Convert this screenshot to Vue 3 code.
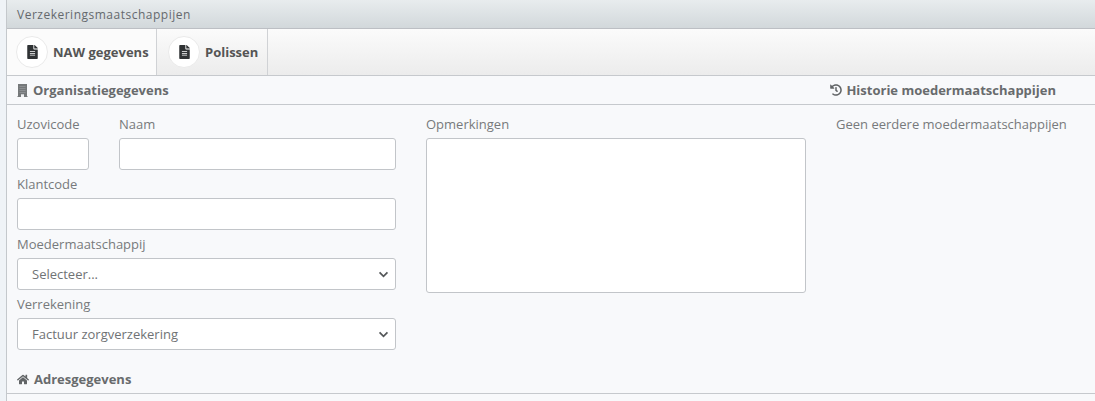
<script setup>
const filePath = 'M224 136V0H24C10.7 0 0 10.7 0 24v464c0 13.3 10.7 24 24 24h336c13.3 0 24-10.7 24-24V160H248c-13.200 0-24-10.800-24-24zm64 236c0 6.600-5.400 12-12 12H108c-6.600 0-12-5.400-12-12v-8c0-6.600 5.400-12 12-12h168c6.600 0 12 5.400 12 12v8zm0-64c0 6.600-5.400 12-12 12H108c-6.600 0-12-5.400-12-12v-8c0-6.600 5.400-12 12-12h168c6.600 0 12 5.400 12 12v8zm0-72v8c0 6.600-5.400 12-12 12H108c-6.600 0-12-5.400-12-12v-8c0-6.600 5.400-12 12-12h168c6.600 0 12 5.400 12 12zm96-114.100v6.100H256V0h6.100c6.400 0 12.500 2.500 17 7l97.900 98c4.500 4.500 7 10.600 7 16.900z'
const tabs = [
  { label: 'NAW gegevens', active: true },
  { label: 'Polissen', active: false },
]
</script>

<template>
  <div class="page">
    <div class="panel">
      <div class="title">Verzekeringsmaatschappijen</div>
      <div class="tabs">
        <div v-for="t in tabs" :key="t.label" class="tab" :class="{ active: t.active }">
          <span class="bubble">
            <svg class="file" viewBox="0 0 384 512"><path :d="filePath" /></svg>
          </span>
          <span class="tab-label">{{ t.label }}</span>
        </div>
      </div>
      <div class="section-head">
        <div class="sec-title">
          <svg class="ico-building" viewBox="0 0 10 13">
            <path class="b-body" d="M0.500 0h9v12h.5v1H0v-1h.5z" />
            <path class="b-win" d="M2 2h6v.8H2zM2 4h6v.8H2zM2 6h6v.8H2zM2 8h6v.8H2z" />
            <path class="b-door" d="M3.500 10.300h3V13h-3z" />
          </svg>
          <span>Organisatiegegevens</span>
        </div>
        <div class="sec-title hist">
          <svg class="ico-hist" viewBox="0 0 512 512"><path d="M504 255.500c.3 136.700-111.200 248.400-247.900 248.500-59 0-113.300-20.500-155.900-54.900-11.100-8.900-11.900-25.500-1.800-35.600l11.300-11.300c8.600-8.600 22.400-9.600 31.900-2C173.100 425.100 212.800 440 256 440c101.700 0 184-82.300 184-184 0-101.700-82.300-184-184-184-48.800 0-93.100 19-126.100 49.900l50.800 50.800c10.100 10.100 2.900 27.300-11.300 27.300H24c-8.800 0-16-7.200-16-16V38.600c0-14.300 17.200-21.400 27.300-11.300l49.400 49.400C129.200 34.100 189.600 8 256 8c136.800 0 247.700 110.800 248 247.500zm-180.900 78.800l9.800-12.600c8.100-10.500 6.300-25.500-4.200-33.700L288 256.300V152c0-13.300-10.700-24-24-24h-16c-13.300 0-24 10.700-24 24v135.700l65.400 50.900c10.500 8.100 25.500 6.200 33.700-4.300z"/></svg>
          <span>Historie moedermaatschappijen</span>
        </div>
      </div>
      <div class="form">
        <div class="col-left">
          <div class="row">
            <div class="field uzovi"><label>Uzovicode</label><div class="control"></div></div>
            <div class="field naam"><label>Naam</label><div class="control"></div></div>
          </div>
          <div class="field"><label>Klantcode</label><div class="control"></div></div>
          <div class="field"><label>Moedermaatschappij</label>
            <div class="control select">
              <span>Selecteer...</span>
              <svg class="chev" viewBox="0 0 12 8"><path d="M1.500 1.500 6 6l4.500-4.500" /></svg>
            </div>
          </div>
          <div class="field"><label>Verrekening</label>
            <div class="control select">
              <span>Factuur zorgverzekering</span>
              <svg class="chev" viewBox="0 0 12 8"><path d="M1.500 1.500 6 6l4.500-4.500" /></svg>
            </div>
          </div>
        </div>
        <div class="col-mid">
          <label>Opmerkingen</label>
          <div class="control area"></div>
        </div>
        <div class="col-right">Geen eerdere moedermaatschappijen</div>
      </div>
      <div class="address">
        <svg class="ico-home" viewBox="0 0 576 512"><path d="M280.400 148.300L96 300.100V464a16 16 0 0 0 16 16l112.100-.3a16 16 0 0 0 15.900-16V368a16 16 0 0 1 16-16h64a16 16 0 0 1 16 16v95.600a16 16 0 0 0 16 16.100L464 480a16 16 0 0 0 16-16V300L295.700 148.300a12.200 12.200 0 0 0-15.300 0zM571.600 251.500L488 182.600V44.100a12 12 0 0 0-12-12h-56a12 12 0 0 0-12 12v72.600L318.500 43a48 48 0 0 0-61 0L4.300 251.500a12 12 0 0 0-1.600 16.900l25.500 31A12 12 0 0 0 45.200 301l235.200-193.700a12.200 12.200 0 0 1 15.300 0L530.900 301a12 12 0 0 0 16.900-1.600l25.500-31a12 12 0 0 0-1.700-16.900z"/></svg>
        <span>Adresgegevens</span>
      </div>
    </div>
  </div>
</template>

<style scoped>
.page {
  width: 1095px;
  height: 401px;
  overflow: hidden;
  background: #eff3f7;
  padding-left: 6px;
  box-sizing: border-box;
  font-family: "Open Sans", sans-serif;
  font-size: 13px;
  color: #6f7274;
}
.panel {
  height: 100%;
  background: #f8f9fb;
  border-left: 1px solid #c4c8cc;
}
.title {
  height: 28px;
  padding-left: 10px;
  line-height: 29px;
  font-size: 12px;
  letter-spacing: 0.5px;
  color: #65696d;
  background: linear-gradient(#e8ecee, #d2d8db);
  border-bottom: 1px solid #bcbfc4;
}
.tabs {
  display: flex;
  height: 46px;
  background: linear-gradient(#fbfbfb, #ececec);
  border-bottom: 1px solid #c6c9cd;
}
.tab {
  display: flex;
  align-items: center;
  gap: 5px;
  padding: 0 9px 0 11px;
  border-right: 1px solid #d0d2d5;
  font-weight: 700;
  font-size: 13px;
  color: #555;
  white-space: nowrap;
}
.tab.active { background: #fbfbfb; width: 150px; box-sizing: border-box; flex: none; padding-left: 9px; }
.bubble {
  width: 32px;
  height: 32px;
  flex: none;
  border-radius: 50%;
  background: #fff;
  border: 1px solid #eaeaea;
  box-sizing: border-box;
  display: flex;
  align-items: center;
  justify-content: center;
}
.file { width: 11px; height: 14px; fill: #2f3234; }
.section-head {
  height: 28px;
  display: flex;
  align-items: center;
  justify-content: space-between;
  padding: 0 39px 0 10px;
  border-bottom: 1px solid #c6c9cd;
}
.sec-title {
  display: flex;
  align-items: center;
  gap: 5px;
  font-weight: 700;
  font-size: 13px;
  color: #686b6d;
}
.hist { gap: 4px; }
.ico-building { width: 11px; height: 13px; }
.b-body { fill: #75787a; }
.b-win { fill: #94979a; }
.b-door { fill: #f0f1f3; }
.ico-hist { width: 12px; height: 12px; fill: #626567; }
.form {
  display: flex;
  padding: 9px 10px 0;
}
.col-left { width: 379px; flex: none; }
.row { display: flex; gap: 30px; }
.field { height: 60px; }
.uzovi { width: 72px; flex: none; }
.naam { flex: 1; }
label {
  display: block;
  height: 24px;
  line-height: 20px;
  color: #777a7c;
}
.control {
  height: 32px;
  box-sizing: border-box;
  background: #fff;
  border: 1px solid #c2c5c9;
  border-radius: 3px;
}
.select {
  display: flex;
  align-items: center;
  justify-content: space-between;
  padding: 0 6px 0 14px;
  color: #707375;
}
.chev { width: 11px; height: 7px; fill: none; stroke: #55585a; stroke-width: 2; }
.col-mid { width: 380px; flex: none; margin-left: 30px; }
.area { height: 155px; }
.col-right { margin-left: 30px; line-height: 20px; color: #777a7c; }
.address {
  display: flex;
  align-items: center;
  gap: 5px;
  height: 28px;
  margin-top: 11px;
  padding-left: 10px;
  border-bottom: 1px solid #c6c9cd;
  font-weight: 700;
  color: #686b6d;
}
.ico-home { width: 12px; height: 11px; fill: #626567; }
</style>
